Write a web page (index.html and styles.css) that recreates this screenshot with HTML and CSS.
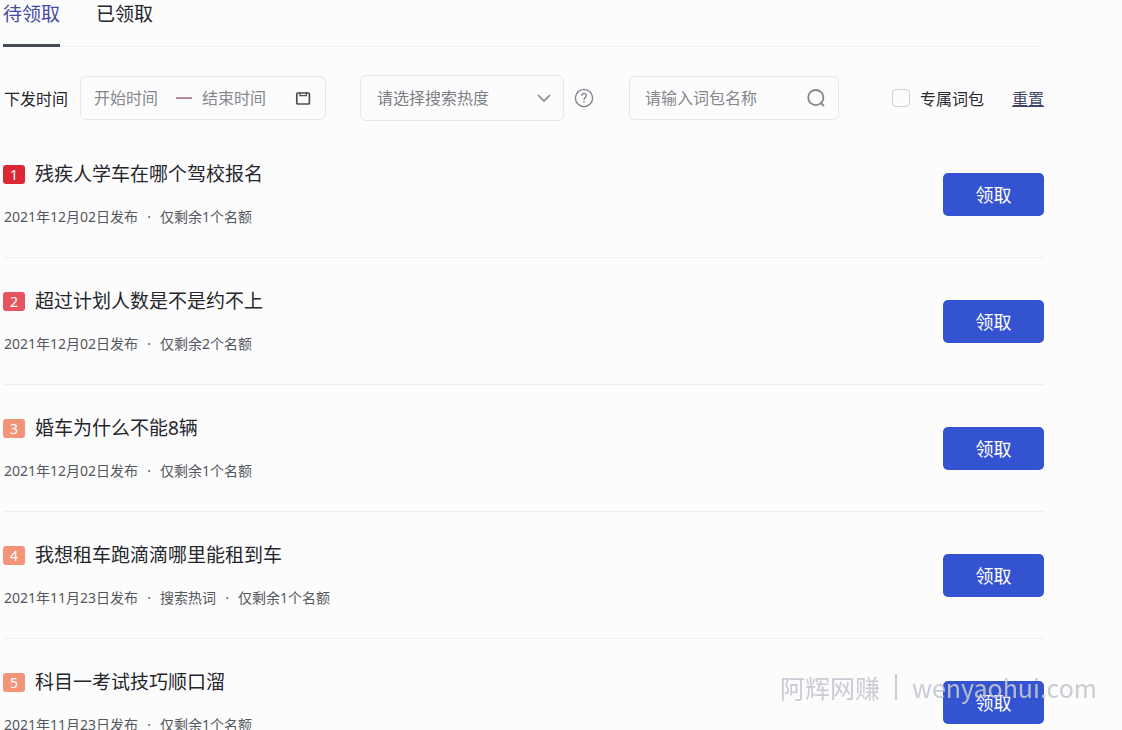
FILE: index.html
```html
<!DOCTYPE html>
<html lang="zh-CN">
<head>
<meta charset="utf-8">
<meta name="viewport" content="width=device-width, initial-scale=1">
<title>待领取</title>
<link rel="stylesheet" href="styles.css">
</head>
<body>
<main class="page">
  <nav class="tabs">
    <a class="tab tab-active" href="#pending">待领取</a>
    <a class="tab" href="#claimed">已领取</a>
  </nav>

  <form class="filters">
    <div class="range-group">
      <label class="label" for="start">下发时间</label>
      <div class="field range">
        <input class="date" id="start" type="text" placeholder="开始时间">
        <span class="dash"></span>
        <input class="date" type="text" placeholder="结束时间" aria-label="结束时间">
        <svg class="calendar" viewBox="0 0 16 16" width="16" height="16" fill="none" stroke="#4a4d55" stroke-width="1.7"><rect x="1.8" y="3" width="12.6" height="11" rx="1"/><path d="M5 2v3.6h6.4V2" stroke-width="1.3"/></svg>
      </div>
    </div>
    <div class="heat-group">
      <div class="field heat">
        <select class="select" aria-label="搜索热度">
          <option>请选择搜索热度</option>
        </select>
        <svg class="chevron" viewBox="0 0 14 10" width="14" height="10" fill="none" stroke="#85888f" stroke-width="1.6"><path d="M1 2l6 6 6-6"/></svg>
      </div>
      <svg class="help" viewBox="0 0 20 20" width="20" height="20" fill="none" stroke="#7d8087" stroke-width="1.3"><circle cx="10" cy="10" r="8.6"/><path d="M7.6 7.8c0-3 4.8-2.9 4.8-.2 0 1.9-2.2 2-2.4 4.2M10 13v1.4"/></svg>
    </div>
    <div class="field search">
      <input class="search-input" type="text" placeholder="请输入词包名称" aria-label="词包名称">
      <svg class="magnifier" viewBox="0 0 20 20" width="20" height="20" fill="none" stroke="#85888f" stroke-width="1.8"><circle cx="9.8" cy="9.6" r="7.6"/><path d="M14.8 15l3.2 3"/></svg>
    </div>
    <div class="extras">
      <label class="exclusive"><input class="check" type="checkbox">专属词包</label>
      <a class="reset" href="#reset">重置</a>
    </div>
  </form>

  <ul class="list">
    <li class="row">
      <div class="info">
        <h2 class="title"><span class="rank rank-1">1</span>残疾人学车在哪个驾校报名</h2>
        <p class="meta"><span>2021年12月02日发布</span><span class="dot">·</span><span>仅剩余1个名额</span></p>
      </div>
      <button class="claim" type="button">领取</button>
    </li>
    <li class="row">
      <div class="info">
        <h2 class="title"><span class="rank rank-2">2</span>超过计划人数是不是约不上</h2>
        <p class="meta"><span>2021年12月02日发布</span><span class="dot">·</span><span>仅剩余2个名额</span></p>
      </div>
      <button class="claim" type="button">领取</button>
    </li>
    <li class="row">
      <div class="info">
        <h2 class="title"><span class="rank">3</span>婚车为什么不能8辆</h2>
        <p class="meta"><span>2021年12月02日发布</span><span class="dot">·</span><span>仅剩余1个名额</span></p>
      </div>
      <button class="claim" type="button">领取</button>
    </li>
    <li class="row">
      <div class="info">
        <h2 class="title"><span class="rank">4</span>我想租车跑滴滴哪里能租到车</h2>
        <p class="meta"><span>2021年11月23日发布</span><span class="dot">·</span><span>搜索热词</span><span class="dot">·</span><span>仅剩余1个名额</span></p>
      </div>
      <button class="claim" type="button">领取</button>
    </li>
    <li class="row">
      <div class="info">
        <h2 class="title"><span class="rank">5</span>科目一考试技巧顺口溜</h2>
        <p class="meta"><span>2021年11月23日发布</span><span class="dot">·</span><span>仅剩余1个名额</span></p>
      </div>
      <button class="claim" type="button">领取</button>
    </li>
  </ul>
</main>
<div class="watermark"><span>阿辉网赚</span><span class="bar"></span><span>wenyaohui.com</span></div>
</body>
</html>
```
FILE: styles.css
```css
* {
  box-sizing: border-box;
}

body {
  margin: 0;
  height: 100vh;
  overflow: hidden;
  background: #fcfcfd;
  color: #24262b;
  font-family: "Noto Sans", "Noto Sans CJK SC", sans-serif;
}

input,
select,
button {
  font: inherit;
}

.page {
  padding: 0 78px 0 3px;
}

.tabs {
  display: flex;
  gap: 36px;
  height: 47px;
  border-bottom: 1px solid #f1f2f4;
}

.tab {
  height: 47px;
  color: #24262b;
  font-size: 19px;
  line-height: 28px;
  text-decoration: none;
}

.tab-active {
  border-bottom: 3px solid #454b58;
  color: #4549a6;
}

.filters {
  display: flex;
  align-items: center;
  height: 46px;
  margin: 28px 0 10px;
  padding-left: 1px;
  font-size: 16px;
}

.range-group,
.heat-group,
.extras,
.exclusive {
  display: flex;
  align-items: center;
}

.range-group {
  gap: 12px;
  margin-right: 34px;
}

.label {
  white-space: nowrap;
}

.field {
  display: flex;
  align-items: center;
  height: 44px;
  border: 1px solid #e6e7eb;
  border-radius: 6px;
}

.range {
  width: 246px;
  padding: 0 14px 0 13px;
}

.date,
.search-input {
  min-width: 0;
  padding: 0;
  border: 0;
  outline: 0;
  background: transparent;
}

.date {
  width: 68px;
}

.date::placeholder,
.search-input::placeholder {
  color: #85878d;
  opacity: 1;
}

.dash {
  width: 16px;
  height: 2px;
  margin: 0 10px 0 14px;
  background: #ae8d93;
}

.calendar {
  margin-left: auto;
}

.heat-group {
  gap: 10px;
  margin-right: 35px;
}

.heat {
  position: relative;
  width: 204px;
  height: 46px;
}

.select {
  width: 100%;
  height: 100%;
  padding: 0 36px 0 16px;
  border: 0;
  outline: 0;
  appearance: none;
  background: transparent;
  color: #7b7d83;
}

.chevron {
  position: absolute;
  right: 12px;
  pointer-events: none;
}

.search {
  width: 210px;
  padding: 0 12px 0 15px;
}

.search-input {
  flex: 1;
}

.extras {
  gap: 28px;
  margin-left: auto;
  white-space: nowrap;
}

.exclusive {
  gap: 10px;
}

.check {
  width: 18px;
  height: 18px;
  margin: 0;
  border: 1px solid #cfd0d5;
  border-radius: 4px;
  appearance: none;
}

.reset {
  color: #3d4763;
}

.list {
  margin: 0;
  padding: 0;
  list-style: none;
}

.row {
  display: flex;
  align-items: center;
  justify-content: space-between;
  padding: 30px 0;
  border-bottom: 1px solid #eeeff2;
}

.title {
  display: flex;
  align-items: center;
  gap: 10px;
  margin: 0 0 20px;
  font-size: 19px;
  font-weight: 400;
  line-height: 26px;
}

.rank {
  width: 22px;
  height: 19px;
  border-radius: 3px;
  background: #f19477;
  color: #fff;
  font-size: 14px;
  line-height: 19px;
  text-align: center;
}

.rank-1 {
  background: #db2634;
}

.rank-2 {
  background: #e6545f;
}

.meta {
  display: flex;
  margin: 0;
  padding-left: 1px;
  color: #55575c;
  font-size: 14px;
  line-height: 20px;
}

.dot {
  width: 22px;
  text-align: center;
}

.claim {
  width: 101px;
  height: 43px;
  padding: 0;
  border: 0;
  border-radius: 5px;
  background: #3353d1;
  color: #fff;
  font-size: 18px;
}

.watermark {
  position: fixed;
  right: 25px;
  bottom: 25px;
  display: flex;
  align-items: center;
  color: rgba(196, 198, 206, 0.9);
  font-family: "Noto Sans CJK SC", sans-serif;
  font-size: 25px;
  line-height: 36px;
  pointer-events: none;
}

.bar {
  width: 2px;
  height: 26px;
  margin: 0 15px;
  background: currentColor;
}
```
